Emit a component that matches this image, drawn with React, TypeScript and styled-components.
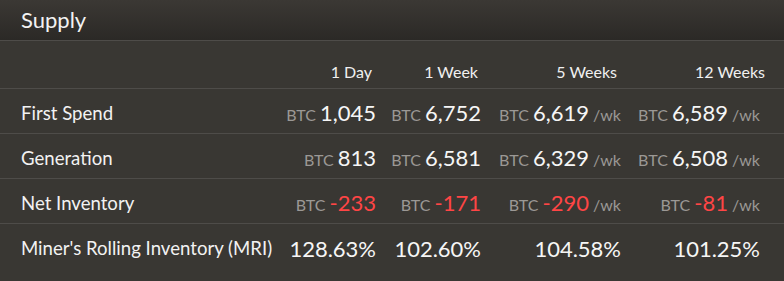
import React from "react";
import styled, { createGlobalStyle } from "styled-components";

const GlobalStyle = createGlobalStyle`
  html, body {
    margin: 0;
    padding: 0;
    background: #393733;
  }
  body {
    font-family: Lato, "Open Sans", sans-serif;
    -webkit-font-smoothing: antialiased;
  }
`;

type Cell = { value: string; unit?: boolean; perWeek?: boolean; negative?: boolean };
type Row = { label: string; cells: Cell[] };

const periods = [
  { label: "1 Day", nudge: 4 },
  { label: "1 Week", nudge: 3 },
  { label: "5 Weeks", nudge: 4 },
  { label: "12 Weeks", nudge: -5 },
];

const rows: Row[] = [
  {
    label: "First Spend",
    cells: [
      { value: "1,045", unit: true },
      { value: "6,752", unit: true },
      { value: "6,619", unit: true, perWeek: true },
      { value: "6,589", unit: true, perWeek: true },
    ],
  },
  {
    label: "Generation",
    cells: [
      { value: "813", unit: true },
      { value: "6,581", unit: true },
      { value: "6,329", unit: true, perWeek: true },
      { value: "6,508", unit: true, perWeek: true },
    ],
  },
  {
    label: "Net Inventory",
    cells: [
      { value: "-233", unit: true, negative: true },
      { value: "-171", unit: true, negative: true },
      { value: "-290", unit: true, perWeek: true, negative: true },
      { value: "-81", unit: true, perWeek: true, negative: true },
    ],
  },
  {
    label: "Miner's Rolling Inventory (MRI)",
    cells: [{ value: "128.63%" }, { value: "102.60%" }, { value: "104.58%" }, { value: "101.25%" }],
  },
];

export default function App() {
  return (
    <>
      <GlobalStyle />
      <Panel>
        <PanelHeader>
          <Title>Supply</Title>
        </PanelHeader>
        <HeadRow>
          <span />
          {periods.map((p) => (
            <HeadCell key={p.label} $nudge={p.nudge}>
              {p.label}
            </HeadCell>
          ))}
        </HeadRow>
        {rows.map((row) => (
          <DataRow key={row.label}>
            <Label>{row.label}</Label>
            {row.cells.map((c, i) => (
              <ValueCell key={i}>
                {c.unit && <Unit>BTC </Unit>}
                <Amount $negative={c.negative}>{c.value}</Amount>
                {c.perWeek && <Unit> /wk</Unit>}
              </ValueCell>
            ))}
          </DataRow>
        ))}
      </Panel>
    </>
  );
}

const Panel = styled.div`
  width: 784px;
  height: 281px;
  background: #393733;
  color: #f4f4f4;
  overflow: hidden;
`;

const PanelHeader = styled.div`
  height: 41px;
  box-sizing: border-box;
  padding: 0 21px;
  display: flex;
  align-items: center;
  background: linear-gradient(#3b3834, #2b2926);
  border-bottom: 1px solid #4e4c49;
`;

const Title = styled.h2`
  margin: 0;
  font-size: 22px;
  font-weight: 400;
  color: #f2f2f2;
  margin-top: -2px;
`;

const Grid = styled.div`
  display: grid;
  grid-template-columns: 1fr 100px 105px 140px 139px;
  padding: 0 24px 0 21px;
  border-bottom: 1px solid #4e4c49;
`;

const HeadRow = styled(Grid)`
  height: 48px;
  box-sizing: border-box;
  align-items: end;
  padding-bottom: 7px;
`;

const HeadCell = styled.span<{ $nudge: number }>`
  text-align: right;
  font-size: 16px;
  color: #f0f0f0;
  margin-right: ${(p) => p.$nudge}px;
`;

const DataRow = styled(Grid)`
  height: 45px;
  box-sizing: border-box;
  padding-top: 3px;
  align-items: center;
  &:last-child {
    border-bottom: none;
  }
`;

const Label = styled.span`
  font-size: 18.6px;
  color: #f2f2f2;
  white-space: nowrap;
`;

const ValueCell = styled.span`
  text-align: right;
  white-space: nowrap;
`;

const Unit = styled.span`
  font-size: 16px;
  color: #9b9895;
  white-space: pre;
`;

const Amount = styled.span<{ $negative?: boolean }>`
  font-size: 22px;
  color: ${(p) => (p.$negative ? "#ff4545" : "#f6f6f6")};
`;
